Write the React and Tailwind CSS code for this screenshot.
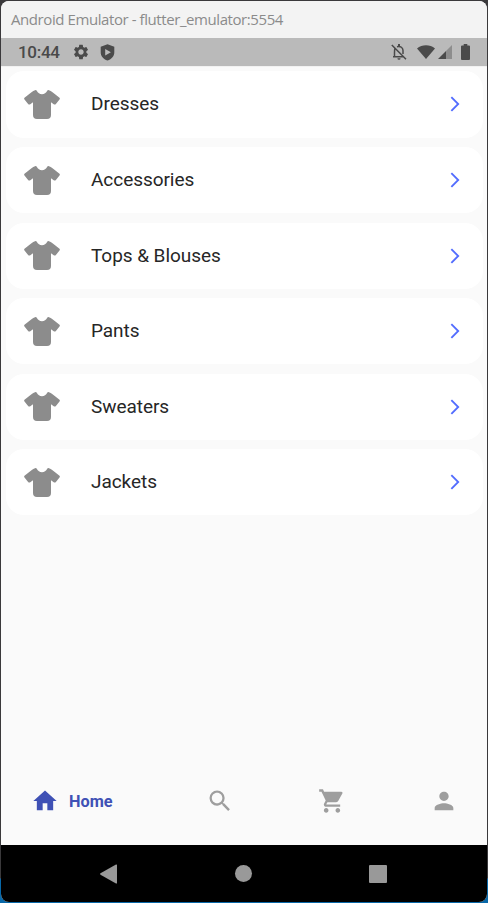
import React from 'react';
import {
  MdArrowForwardIos, MdHome, MdSearch, MdShoppingCart, MdPerson, MdSettings,
} from 'react-icons/md';

const categories = ['Dresses', 'Accessories', 'Tops & Blouses', 'Pants', 'Sweaters', 'Jackets'];

function StatusBar() {
  return (
    <div className="flex h-7 shrink-0 items-center bg-[#bababa] pl-[17px] pr-[17px] text-[#4a4a4a]">
      <span className="w-[54px] pt-px text-[17px] font-medium leading-[27px] tracking-[-0.3px]">10:44</span>
      <MdSettings className="size-[18px]" />
      <svg className="ml-[9px] size-[17px]" viewBox="0 0 17 17" fill="currentColor">
        <path fillRule="evenodd" d="M8.5.2 15.3 2.7v5.5c0 3.8-2.6 6.8-6.8 8.3-4.2-1.5-6.8-4.5-6.8-8.3V2.7zM6.2 5v6.6l5.7-3.3z" />
      </svg>
      <svg className="ml-auto h-[16px] w-[16px]" viewBox="0 0 16 16" fill="none" stroke="currentColor" strokeWidth="1.5">
        <path d="M.8 1 15 15.3M3.9 4.8C3.4 6 3.5 8 3.5 12.5M2 12.7h10.3M6 2.7C9.8 1.6 12 4 12 6.5v3.4" />
        <path d="M7 0h2v2.4H7zM6.4 14.2h3.2A1.6 1.6 0 0 1 6.4 14.2z" fill="currentColor" stroke="none" />
      </svg>
      <svg className="ml-[10px] h-[14px] w-[18px]" viewBox="0 0 18 14" fill="currentColor">
        <path d="M0 3.4C5-.9 13-.9 18 3.4L9 14z" />
      </svg>
      <svg className="ml-[3px] size-[14px]" viewBox="0 0 14 14" fill="currentColor">
        <path d="M8 6v8H0z" />
        <path d="M14 0v14H8V6z" opacity=".4" />
      </svg>
      <svg className="ml-[9px] h-[16px] w-[9px]" viewBox="0 0 9 16" fill="currentColor">
        <path d="M2.7 0h3.6v1.6H8q1 0 1 1V15q0 1-1 1H1q-1 0-1-1V2.6q0-1 1-1h1.700z" />
      </svg>
    </div>
  );
}

function ShirtIcon() {
  return (
    <svg className="h-[29px] w-[36px] text-[#8c8c8c]" viewBox="0 0 36 29" fill="currentColor">
      <path d="M11 .2q1.2-.4 1.8.6C13.900 3 15.700 4.200 18 4.200S22.100 3 23.200.8Q23.800-.2 25 .2q1.800.6 3.200 1.700l7 5.500q1.200 1 .3 2.200l-3.600 4.400q-1 1-2.200.2L27 12.200V25q0 4-4 4H13q-4 0-4-4V12.200l-2.700 2q-1.200.8-2.200-.2L.5 9.600Q-.4 8.400.8 7.400l7-5.500Q9.200.8 11 .2z" />
    </svg>
  );
}

function CategoryCard({ name }) {
  return (
    <div className="flex h-[66.2px] shrink-0 items-center rounded-[18px] bg-white pl-[18px] pr-[19px]">
      <ShirtIcon />
      <span className="ml-[31px] text-[19px] leading-6 tracking-[-0.05px] text-[#262626]">{name}</span>
      <MdArrowForwardIos className="ml-auto size-[18px] text-[#536dfe]" />
    </div>
  );
}

export default function App() {
  return (
    <div className="flex h-[903px] w-[488px] flex-col bg-linear-to-b from-[#3a393b] from-[878px] to-[#0868a8] to-[879px] p-px font-['Roboto',sans-serif]">
      <div className="flex flex-1 flex-col overflow-hidden rounded-[8px] bg-[#fafafa]">
        <header className="flex h-[37px] shrink-0 items-center bg-[#f3f3f3] pl-[10px] font-['Open_Sans',sans-serif] text-[15px] tracking-[-0.42px] text-[#8b8b8b]">
          <span className="whitespace-nowrap">Android Emulator - flutter_emulator:5554</span>
        </header>
        <StatusBar />
        <main className="flex flex-1 flex-col gap-[9.4px] border-t border-[#f1f1f1] pl-[5px] pr-[4px] pt-[4.4px]">
          {categories.map((name) => <CategoryCard key={name} name={name} />)}
        </main>
        <nav className="flex h-[88px] shrink-0 items-center pl-[30px] text-[#9e9e9e]">
          <div className="flex w-[175px] items-center gap-[10px] text-[#3f51b5]">
            <MdHome className="size-[28px]" />
            <span className="pt-[2px] text-[16.3px] font-bold">Home</span>
          </div>
          <MdSearch className="size-[28px]" />
          <MdShoppingCart className="ml-[84px] size-[28px]" />
          <MdPerson className="ml-[83.5px] size-[28px]" />
        </nav>
        <footer className="flex h-[57px] shrink-0 items-center bg-black pl-[99px] text-[#999]">
          <svg className="h-[20px] w-[17px]" viewBox="0 0 17 20" fill="currentColor">
            <path d="M16 .5q1-.3 1 .6v17.8q0 .9-1 .6L.5 10.700q-.9-.7 0-1.400z" />
          </svg>
          <div className="ml-[118px] size-[17px] rounded-full bg-[#999]" />
          <div className="ml-[117px] size-[18px] rounded-[1px] bg-[#999]" />
        </footer>
      </div>
    </div>
  );
}
